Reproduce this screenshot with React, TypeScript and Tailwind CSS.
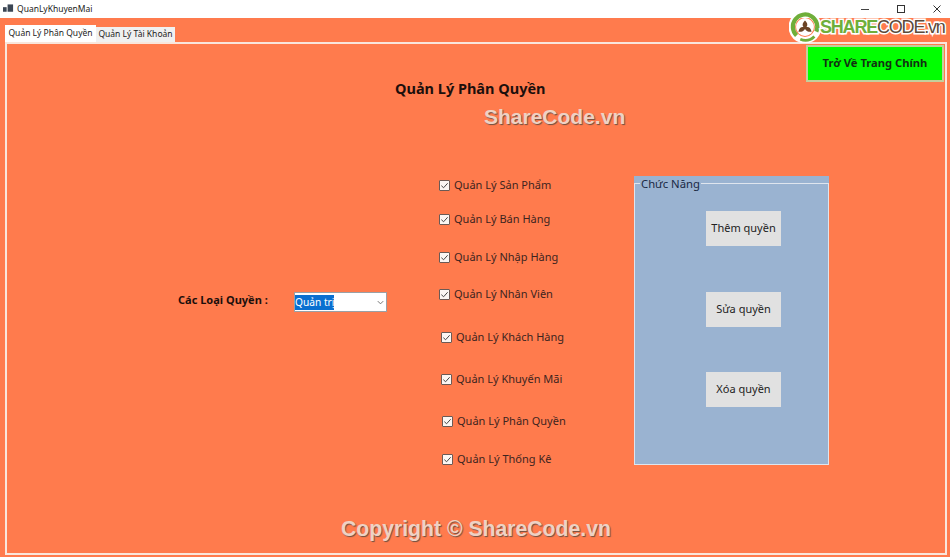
const font = "font-['Noto_Sans','Open_Sans',sans-serif]";

const permissions = [
  { name: 'Quản Lý Sản Phẩm', cls: 'mt-[1px] ml-0' },
  { name: 'Quản Lý Bán Hàng', cls: 'mt-[18px] ml-0' },
  { name: 'Quản Lý Nhập Hàng', cls: 'mt-[22px] ml-0' },
  { name: 'Quản Lý Nhân Viên', cls: 'mt-[21px] ml-0' },
  { name: 'Quản Lý Khách Hàng', cls: 'mt-[27px] ml-[2px]' },
  { name: 'Quản Lý Khuyến Mãi', cls: 'mt-[26px] ml-[2px]' },
  { name: 'Quản Lý Phân Quyền', cls: 'mt-[26px] ml-[3px]' },
  { name: 'Quản Lý Thống Kê', cls: 'mt-[22px] ml-[3px]' },
];

const CheckRow = ({ name, cls }: { name: string; cls: string }) => (
  <label className={`flex h-4 items-center gap-[4px] text-[11px] text-[#3d2420] ${cls}`}>
    <span className="flex h-[11px] w-[11px] shrink-0 items-center justify-center rounded-[1px] border border-[#6b5a55] bg-[#fbf6f3]">
      <svg viewBox="0 0 10 10" className="h-[9px] w-[9px]" fill="none" stroke="#444" strokeWidth="1.1">
        <path d="M1.5 5.2 L4 7.5 L8.5 2.5" />
      </svg>
    </span>
    {name}
  </label>
);

const ActionButton = ({ label, cls }: { label: string; cls: string }) => (
  <button className={`h-[35px] w-[75px] bg-[#e1e1e1] text-[11px] text-[#222] ${cls}`}>{label}</button>
);

const Logo = () => (
  <div className="absolute left-[789px] top-[11px] flex items-center">
    <svg viewBox="0 0 34 34" className="h-[32px] w-[32px]">
      <circle cx="17" cy="17" r="14" fill="none" stroke="#fff" strokeWidth="7" />
      <path d="M8 26 A13 13 0 1 1 29 22" fill="none" stroke="#6fae3a" strokeWidth="4.5" />
      <path d="M12 30 A14 14 0 0 0 27 27" fill="none" stroke="#6fae3a" strokeWidth="3" />
      <circle cx="17" cy="17" r="9.5" fill="#fff" />
      <path d="M17 10 C20 13 20 15 18.5 17 C21 16.5 23 17.5 24 22 C21 22.5 18.5 21.5 17 19 C15.5 21.5 13 22.5 10 22 C11 17.5 13 16.5 15.5 17 C14 15 14 13 17 10 Z" fill="#6b4426" />
    </svg>
    <span className="ml-[-1px] whitespace-nowrap font-['Liberation_Sans',sans-serif] text-[18px] leading-none tracking-[-1.2px] [-webkit-text-stroke:3px_white] [paint-order:stroke_fill]">
      <span className="font-bold text-[#6fae3a]">SHARE</span>
      <span className="text-[#5b4a3a]">CODE.vn</span>
    </span>
  </div>
);

const Watermark = ({ text, cls }: { text: string; cls: string }) => (
  <div
    className={`absolute whitespace-nowrap font-['Liberation_Sans',sans-serif] font-bold text-[#eed2c4] [text-shadow:1px_1px_1px_#6e5042] ${cls}`}
  >
    {text}
  </div>
);

export default function App() {
  return (
    <div className={`relative flex h-screen w-full flex-col overflow-hidden bg-[#ff7b4d] ${font}`}>
      <div className="flex h-[18px] shrink-0 items-center bg-white text-[8.5px] text-[#222]">
        <svg viewBox="0 0 12 10" className="ml-[3px] h-[10px] w-[11px]" fill="#3b4654">
          <rect x="0" y="3" width="4" height="5" />
          <rect x="5" y="0" width="6" height="8" />
        </svg>
        <span className="ml-[3px]">QuanLyKhuyenMai</span>
        <div className="ml-auto flex items-center gap-[26px] pr-[8px]">
          <svg viewBox="0 0 10 10" className="h-[10px] w-[10px]" stroke="#444" fill="none">
            <path d="M1 5.5 H9" />
          </svg>
          <svg viewBox="0 0 10 10" className="h-[10px] w-[10px]" stroke="#333" fill="none">
            <rect x="1.5" y="1.5" width="7" height="7" />
          </svg>
          <svg viewBox="0 0 10 10" className="h-[10px] w-[10px]" stroke="#333" fill="none">
            <path d="M1.5 1.5 L8.5 8.5 M8.5 1.5 L1.5 8.5" />
          </svg>
        </div>
      </div>

      <div className="flex min-h-0 flex-1 flex-col pb-[2px] pl-[5px] pr-[3px] pt-[7px]">
        <div className="flex h-[17px] shrink-0 items-end text-[8.5px] text-[#222]">
          <div className="flex h-[17px] w-[91px] items-center justify-center bg-white">Quản Lý Phân Quyền</div>
          <div className="flex h-[15px] w-[79px] items-center justify-center bg-[#f0f0f0]">Quản Lý Tài Khoản</div>
        </div>

        <div className="flex min-h-0 flex-1 flex-col border-2 border-[#f9e6dc]">
          <div className="flex h-[38px] shrink-0 items-start justify-between">
            <h1 className="ml-[388px] mt-[34px] whitespace-nowrap text-[14.5px] font-bold leading-5 text-[#1c0f0c]">
              Quản Lý Phân Quyền
            </h1>
            <button className="mr-[1px] mt-[1px] h-[37px] w-[138px] shrink-0 border-2 border-[#c4cf9c] bg-[#00ff00] text-[11.2px] font-bold text-[#123012]">
              Trở Về Trang Chính
            </button>
          </div>

          <div className="mt-[94px] flex items-start">
            <div className="ml-[171px] mt-[116px] flex w-[261px] items-center">
              <span className="mb-[4px] w-[116px] text-[11px] font-bold text-[#1c0f0c]">Các Loại Quyền :</span>
              <div className="flex h-[20px] w-[93px] items-center border border-[#9aa0a6] bg-white pr-[1px] text-[10.2px]">
                <span className="bg-[#0a6fd0] text-white">Quản trị</span>
                <svg viewBox="0 0 10 10" className="ml-auto h-[9px] w-[9px]" stroke="#666" fill="none">
                  <path d="M2 3.5 L5 6.5 L8 3.5" />
                </svg>
              </div>
            </div>

            <div className="flex w-[195px] shrink-0 flex-col">
              {permissions.map((p) => (
                <CheckRow key={p.name} name={p.name} cls={p.cls} />
              ))}
            </div>

            <div className="h-[289px] w-[195px] shrink-0 bg-[#9ab3d1]">
              <fieldset className="h-full border border-[#dfe5ee]">
                <legend className="ml-[5px] px-[1px] text-[11.3px] leading-[15px] text-[#1b2a44]">Chức Năng</legend>
                <div className="flex flex-col pl-[71px]">
                  <ActionButton label="Thêm quyền" cls="mt-[20px]" />
                  <ActionButton label="Sửa quyền" cls="mt-[46px]" />
                  <ActionButton label="Xóa quyền" cls="mt-[45px]" />
                </div>
              </fieldset>
            </div>
          </div>
        </div>
      </div>

      <Logo />
      <Watermark text="ShareCode.vn" cls="left-[484px] top-[105px] text-[21px] leading-6" />
      <Watermark text="Copyright © ShareCode.vn" cls="left-[341px] top-[517px] text-[21.2px] leading-6" />
    </div>
  );
}
